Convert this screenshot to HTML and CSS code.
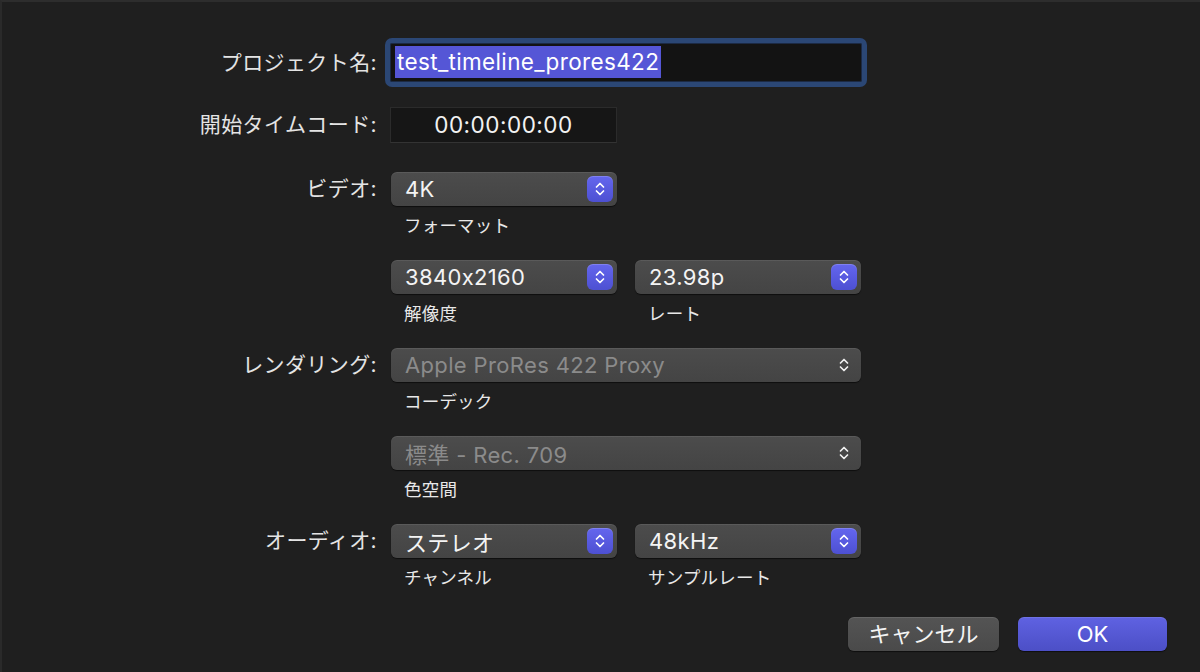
FILE: index.html
```html
<!DOCTYPE html>
<html lang="ja">
<head>
<meta charset="utf-8">
<title>新規プロジェクト</title>
<link rel="stylesheet" href="styles.css">
</head>
<body>
<div class="dialog">
  <div class="form">
    <div class="row row-name">
      <div class="label">プロジェクト名:</div>
      <div class="controls">
        <div class="name-field"><span class="selection">test_timeline_prores422</span></div>
      </div>
    </div>

    <div class="row row-tc">
      <div class="label">開始タイムコード:</div>
      <div class="controls">
        <div class="timecode">00:00:00:00</div>
      </div>
    </div>

    <div class="row row-popup">
      <div class="label">ビデオ:</div>
      <div class="controls">
        <div class="pair">
          <div class="group">
            <div class="popup short"><span class="value">4K</span><span class="stepper"><svg viewBox="0 0 12 18" width="12" height="18"><path d="M2.5 7 L6 3.5 L9.5 7 M2.5 11 L6 14.5 L9.5 11" fill="none" stroke="#fff" stroke-width="1.7" stroke-linecap="round" stroke-linejoin="round"/></svg></span></div>
            <div class="sub">フォーマット</div>
          </div>
        </div>
      </div>
    </div>

    <div class="row row-popup">
      <div class="label"></div>
      <div class="controls">
        <div class="pair">
          <div class="group">
            <div class="popup short"><span class="value">3840x2160</span><span class="stepper"><svg viewBox="0 0 12 18" width="12" height="18"><path d="M2.5 7 L6 3.5 L9.5 7 M2.5 11 L6 14.5 L9.5 11" fill="none" stroke="#fff" stroke-width="1.7" stroke-linecap="round" stroke-linejoin="round"/></svg></span></div>
            <div class="sub">解像度</div>
          </div>
          <div class="group">
            <div class="popup short"><span class="value">23.98p</span><span class="stepper"><svg viewBox="0 0 12 18" width="12" height="18"><path d="M2.5 7 L6 3.5 L9.5 7 M2.5 11 L6 14.5 L9.5 11" fill="none" stroke="#fff" stroke-width="1.7" stroke-linecap="round" stroke-linejoin="round"/></svg></span></div>
            <div class="sub">レート</div>
          </div>
        </div>
      </div>
    </div>

    <div class="row row-popup">
      <div class="label">レンダリング:</div>
      <div class="controls">
        <div class="group">
          <div class="popup wide disabled"><span class="value">Apple ProRes 422 Proxy</span><span class="chev"><svg viewBox="0 0 12 18" width="12" height="18"><path d="M2.5 7 L6 3.5 L9.5 7 M2.5 11 L6 14.5 L9.5 11" fill="none" stroke="#f2f2f2" stroke-width="1.7" stroke-linecap="round" stroke-linejoin="round"/></svg></span></div>
          <div class="sub">コーデック</div>
        </div>
      </div>
    </div>

    <div class="row row-popup">
      <div class="label"></div>
      <div class="controls">
        <div class="group">
          <div class="popup wide disabled"><span class="value">標準 - Rec. 709</span><span class="chev"><svg viewBox="0 0 12 18" width="12" height="18"><path d="M2.5 7 L6 3.5 L9.5 7 M2.5 11 L6 14.5 L9.5 11" fill="none" stroke="#f2f2f2" stroke-width="1.7" stroke-linecap="round" stroke-linejoin="round"/></svg></span></div>
          <div class="sub">色空間</div>
        </div>
      </div>
    </div>

    <div class="row row-popup last">
      <div class="label">オーディオ:</div>
      <div class="controls">
        <div class="pair">
          <div class="group">
            <div class="popup short"><span class="value">ステレオ</span><span class="stepper"><svg viewBox="0 0 12 18" width="12" height="18"><path d="M2.5 7 L6 3.5 L9.5 7 M2.5 11 L6 14.5 L9.5 11" fill="none" stroke="#fff" stroke-width="1.7" stroke-linecap="round" stroke-linejoin="round"/></svg></span></div>
            <div class="sub">チャンネル</div>
          </div>
          <div class="group">
            <div class="popup short"><span class="value">48kHz</span><span class="stepper"><svg viewBox="0 0 12 18" width="12" height="18"><path d="M2.5 7 L6 3.5 L9.5 7 M2.5 11 L6 14.5 L9.5 11" fill="none" stroke="#fff" stroke-width="1.7" stroke-linecap="round" stroke-linejoin="round"/></svg></span></div>
            <div class="sub">サンプルレート</div>
          </div>
        </div>
      </div>
    </div>
  </div>

  <div class="buttons">
    <button class="btn cancel">キャンセル</button>
    <button class="btn ok">OK</button>
  </div>
</div>
</body>
</html>
```

FILE: styles.css
```css
html, body {
  margin: 0;
  padding: 0;
}

body {
  width: 1200px;
  height: 672px;
  overflow: hidden;
  background: #1f1f1f;
  font-family: Inter, "Noto Sans CJK JP", sans-serif;
  color: #ececec;
}

.dialog {
  box-sizing: border-box;
  width: 1200px;
  height: 672px;
  border-top: 2px solid #2d2d2d;
  border-left: 2px solid #2a2a2a;
  padding-top: 36px;
}

.form {
  display: flex;
  flex-direction: column;
}

.row {
  display: flex;
  align-items: flex-start;
}

.label {
  width: 375px;
  flex: none;
  text-align: right;
  font-size: 21px;
  color: #e4e4e4;
  letter-spacing: 0.4px;
}

.controls {
  margin-left: 14px;
  display: flex;
  flex-direction: column;
}

/* project name */
.row-name .label {
  line-height: 49px;
}

.name-field {
  box-sizing: border-box;
  margin-left: -6px;
  width: 482px;
  height: 49px;
  border: 5px solid #2b4775;
  border-radius: 7px;
  background: #131313;
  padding: 3px 0 0 5px;
  box-shadow: inset 0 0 0 1px #1c2a44;
}

.selection {
  display: inline-block;
  background: #5556d6;
  color: #ffffff;
  font-size: 22.5px;
  line-height: 32px;
  height: 32px;
  padding: 0 2px 0 2px;
  letter-spacing: 0.35px;
}

/* timecode */
.row-tc {
  margin-top: 20px;
}

.row-tc .label {
  line-height: 36px;
}

.timecode {
  box-sizing: border-box;
  width: 227px;
  height: 36px;
  margin-left: -1px;
  background: #161616;
  border: 1px solid #2b2b2b;
  border-bottom-color: #333;
  text-align: center;
  font-size: 22.5px;
  line-height: 34px;
  letter-spacing: 0.5px;
  color: #f2f2f2;
}

/* popups */
.row-popup {
  margin-top: 29px;
}

.row-popup + .row-popup {
  margin-top: 22px;
}

.row-popup .label {
  line-height: 34px;
}

.pair {
  display: flex;
  gap: 18px;
}

.group {
  display: flex;
  flex-direction: column;
}

.popup {
  box-sizing: border-box;
  height: 34px;
  border-radius: 6px;
  background: linear-gradient(#4c4c4c, #444444);
  box-shadow: 0 1px 1px rgba(0, 0, 0, 0.55), inset 0 1px 0 rgba(255, 255, 255, 0.08);
  display: flex;
  align-items: center;
  justify-content: space-between;
  padding: 0 4px 0 14px;
}

.popup.short {
  width: 226px;
}

.popup.wide {
  width: 470px;
}

.value {
  font-size: 22px;
  color: #f4f4f4;
  letter-spacing: 0.35px;
  white-space: nowrap;
}

.popup.disabled .value {
  color: #8b8b8b;
}

.stepper {
  width: 26px;
  height: 26px;
  border-radius: 6px;
  background: linear-gradient(#6466ee, #4d50d2);
  box-shadow: inset 0 1px 0 rgba(255, 255, 255, 0.18);
  display: flex;
  align-items: center;
  justify-content: center;
}

.chev {
  width: 26px;
  height: 26px;
  display: flex;
  align-items: center;
  justify-content: center;
}

.sub {
  margin-top: 8px;
  padding-left: 13px;
  font-size: 17.5px;
  line-height: 24px;
  height: 24px;
  color: #e8e8e8;
  letter-spacing: 0.2px;
}

/* buttons */
.buttons {
  display: flex;
  justify-content: flex-end;
  gap: 19px;
  margin-top: 27px;
  padding-right: 33px;
}

.btn {
  box-sizing: border-box;
  height: 34px;
  border: none;
  border-radius: 6px;
  font-family: Inter, "Noto Sans CJK JP", sans-serif;
  font-size: 22px;
  color: #f4f4f4;
  padding: 0;
  line-height: 34px;
  box-shadow: 0 1px 1px rgba(0, 0, 0, 0.55), inset 0 1px 0 rgba(255, 255, 255, 0.1);
}

.btn.cancel {
  width: 151px;
  background: linear-gradient(#545454, #4a4a4a);
}

.btn.ok {
  width: 149px;
  background: linear-gradient(#5f62e2, #4c4fc6);
  color: #ffffff;
}
```
